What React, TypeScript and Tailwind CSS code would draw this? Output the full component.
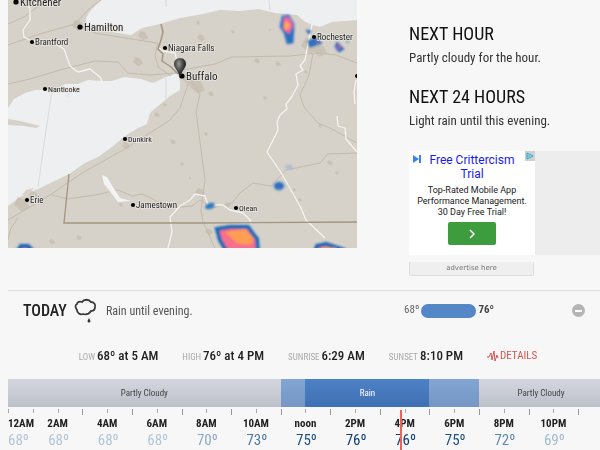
import React from "react";

const roads = [
  "M8 45 L40 34 L75 24 L90 8 L101 0",
  "M8 84 L30 79 L60 70 L95 61 L118 62 L128 73 L150 75 L176 73",
  "M76 24 L95 33 L125 38 L157 43",
  "M8 24 L24 17 L36 8 L50 0",
  "M158 43 L155 55 L158 67 L171 76",
  "M182 70 L215 64 L232 57 L290 56 L318 53 L336 55 L357 63",
  "M192 82 L200 94 L196 112 L205 180 L201 210 L203 222",
  "M188 84 L180 108 L170 120 L150 133 L128 147 L109 158 L82 173 L50 195 L8 220",
  "M52 195 L68 199 L95 195 L118 190 L132 196 L142 194 L155 200 L165 208 L180 207 L192 206 L200 200 L212 208 L232 203 L240 193 L253 183 L271 186 L286 170 L320 163 L328 154 L357 153",
  "M313 54 L309 75 L300 95 L304 107 L318 123 L332 129 L357 143",
  "M18 218 L11 228 L8 240",
  "M203 222 L215 248",
];

const rivers = [
  "M20 0 L30 8 L30 20 L23 30 L24 37 L32 41 L52 42 L64 49 L70 66 L78 72 L90 69 L101 78 L102 83",
  "M159 48 L163 51 L175 53 L178 66",
  "M312 25 L308 44 L305 60 L300 66 L303 70 L296 74 L298 85 L291 98 L286 104 L287 109 L280 115 L277 122 L278 130 L267 152 L280 171 L291 190 L301 208 L306 220 L325 238",
  "M337 116 L338 126 L345 128 L346 139 L351 145 L357 152",
  "M168 248 L172 232 L170 217 L180 206 L190 200 L195 194 L205 196 L208 205 L223 205 L230 210 L243 213 L250 220 L251 224",
  "M356 80 L354 92 L355 104",
];

const towns = [
  [143, 36, 5], [138, 62, 5], [201, 38, 4], [192, 80, 9], [198, 88, 7], [211, 94, 3],
  [233, 32, 2], [257, 61, 3], [278, 64, 3], [265, 98, 2], [198, 23, 2], [306, 72, 2],
  [310, 46, 9], [320, 51, 7], [126, 146, 4], [173, 142, 3], [22, 205, 8], [34, 196, 5],
  [52, 242, 3], [79, 238, 3], [182, 164, 2], [190, 178, 1], [78, 26, 6], [209, 232, 4],
  [330, 163, 3], [337, 173, 2], [320, 126, 2], [157, 115, 3], [165, 105, 2], [200, 193, 5],
  [300, 200, 2], [206, 134, 2], [270, 30, 1], [228, 205, 3], [294, 190, 2], [121, 205, 2],
];

const cities: [string, number, number, number, number][] = [
  ["Kitchener", 16, 2, 11, 6],
  ["Hamilton", 80, 27, 11, 31],
  ["Brantford", 32, 42, 9, 45],
  ["Niagara Falls", 165, 48, 9, 51],
  ["Buffalo", 182, 76, 11, 80],
  ["Nanticoke", 45, 89, 8, 92],
  ["Dunkirk", 125, 139, 8, 142],
  ["Erie", 27, 200, 9, 203],
  ["Jamestown", 133, 205, 9, 208],
  ["Olean", 236, 208, 8, 211],
  ["Rochester", 314, 37, 9, 40],
];

function RadarMap() {
  return (
    <svg
      viewBox="8 0 349 248"
      role="img"
      aria-label="Radar map around Buffalo"
      className="block w-full bg-[#d6d1c9]"
    >
      <defs>
        <filter id="soft" x="-50%" y="-50%" width="200%" height="200%">
          <feGaussianBlur stdDeviation="1.3" />
        </filter>
        <radialGradient id="pin" cx="0.4" cy="0.3" r="0.7">
          <stop offset="0" stopColor="#999" />
          <stop offset="0.5" stopColor="#444" />
          <stop offset="1" stopColor="#111" />
        </radialGradient>
      </defs>
      <g fill="#eeeff1">
        <path d="M101 0 Q97 4 93 8 Q88 13 86 18 Q86 24 88 26 Q94 30 101 30 L118 33 L131 35 L142 28 L160 24 L180 18 L203 14 L220 10 L240 11 L258 9 L275 13 L297 15 L304 21 L312 25 L320 27 L332 22 L357 20 V0 Z" />
        <path d="M8 108 L14 99 L25 93 L35 90 L57 89 L65 84 L78 84 L88 80 L102 81 L112 81 L124 77 L141 79 L153 83 L166 77 L178 73 L180 82 L180 90 L170 96 L158 106 L150 113 L147 124 L138 128 L125 136 L112 147 L98 157 L85 163 L69 174 L40 188 L20 197 L8 206 Z" />
      </g>
      <path d="M8 119 L20 121 L40 126 L36 128 L24 126 L8 125 Z M22 195 L26 190 L34 188 L28 195 Z" fill="#d6d1c9" />
      <g fill="#c7bfb1" opacity="0.8">
        {towns.map(([x, y, r], i) => (
          <path key={i} d={`M${x - r} ${y} l${r / 2} ${-r} l${r} ${r / 3} l${r / 2} ${r} l${-r} ${r / 2} z`} />
        ))}
      </g>
      <path d="M166 0 V7 M166 78 V100 M269 0 L270 10 M52 91 L46 130 L38 187" fill="none" stroke="#d9dadc" />
      <g fill="none" stroke="#c3bbab" strokeWidth="1" strokeLinejoin="round">
        {roads.map((d) => (
          <path key={d} d={d} />
        ))}
      </g>
      <g fill="none" stroke="#f5f4f2" strokeWidth="1.3" strokeLinejoin="round">
        {rivers.map((d) => (
          <path key={d} d={d} />
        ))}
      </g>
      <path d="M102 175 L107 177 L113 187 L120 198 L131 201 L118 202 L112 194 L104 184 Z" fill="#f3f3f3" />
      <path d="M69 174 L64 223 L200 223 L357 222" fill="none" stroke="#a3967f" strokeWidth="1.3" />
      <path d="M161 24 L163 32 L161 40 L158 49 L163 54 L162 61 L171 67 L178 74" fill="none" stroke="#a3967f" strokeWidth="1.5" />
      <g filter="url(#soft)">
        <path d="M282 16 L289 15 L294 24 L294 31 L293 43 L287 44 L284 33 L280 27 Z" fill="#2c6fc0" stroke="#4f86c8" />
        <path d="M284 17 L290 18 L293 26 L289 34 L283 29 Z" fill="#f5659d" />
        <path d="M285 21 L290 24 L288 30 L284 28 Z" fill="#ffae3c" />
        <path d="M308 41 L316 38 L322 43 L316 45 L310 47 Z M306 30 L311 31 L309 34 Z M337 42 L344 49 L339 52 L335 47 Z M347 40 L348 43" fill="#2c6fc0" stroke="#2c6fc0" />
        <circle cx="339" cy="47" r="2" fill="#b55aa5" />
        <circle cx="317" cy="42" r="2" fill="#756db5" />
        <ellipse cx="279" cy="186" rx="5" ry="4" fill="#236dbd" stroke="#5b96cf" />
        <circle cx="279" cy="187" r="1" fill="#8b5bb0" />
        <ellipse cx="210" cy="206" rx="5" ry="3" fill="#3179bf" transform="rotate(-20 210 206)" />
        <ellipse cx="289" cy="167" rx="4" ry="2" fill="#a5bfd4" />
        <ellipse cx="68" cy="95" rx="2" ry="1" fill="#cfe0ef" />
        <path d="M217 229 L230 227 L248 227 L253 234 L257 239 L258 252 H227 L220 240 Z" fill="#f8708c" stroke="#1667b8" strokeWidth="4" />
        <path d="M225 232 L246 229 L254 239 L250 245 L237 243 Z" fill="#ff9d52" />
        <path d="M315 252 L317 246 L326 244 L344 250 V252 Z" fill="#f06698" stroke="#1667b8" strokeWidth="4" />
        <path d="M322 248 L336 249" stroke="#ffac46" strokeWidth="2" />
        <path d="M18 251 L21 246 L28 246 L33 251 Z" fill="#e05aa0" stroke="#1667b8" strokeWidth="4" />
      </g>
      <g fill="#000" stroke="none">
        {cities.map(([name, x, y, size]) => (
          <circle key={name} cx={x} cy={y} r={size > 10 ? 2.6 : 2.1} />
        ))}
        <circle cx="357" cy="76" r="2" />
      </g>
      <path d="M180 58 C176 58 174 61 174 64 C174 68 178 70 180 78 C182 70 186 68 186 64 C186 61 184 58 180 58 Z" fill="url(#pin)" />
      <g fill="#222" stroke="#e9e6e1" strokeWidth="1.5" paintOrder="stroke">
        {cities.map(([name, x, , size, base]) => (
          <text key={name} x={x + (size > 10 ? 4 : 3)} y={base} fontSize={size}>
            {name}
          </text>
        ))}
      </g>
    </svg>
  );
}

function Summary({ title, text }: { title: string; text: string }) {
  return (
    <section className="mb-4">
      <h2 className="text-[18px] leading-6 text-[#111]">{title}</h2>
      <p className="text-[13px] leading-[23px] text-[#333]">{text}</p>
    </section>
  );
}

function Ad() {
  return (
    <>
      <div className="-mr-2 bg-[#ededed]">
        <div className="relative h-[104px] w-[126px] bg-white text-center font-[Roboto,sans-serif]">
          <svg viewBox="0 0 8 8" className="absolute top-1 left-1 size-2" aria-hidden="true">
            <path d="M0 0 L6 4 L0 8 Z M6 0 H8 V8 H6 Z" fill="#3b82f0" />
          </svg>
          <svg viewBox="0 0 10 10" className="absolute top-0 right-0 size-[10px] bg-[#d0d0d0]" aria-hidden="true">
            <path d="M2 2 L8 5 L2 8 Z M2 5 H5" fill="none" stroke="#1fb2cf" />
          </svg>
          <a href="#ad" className="block px-4 pt-0.5 text-[12px] leading-[14px] text-[#1a1aee]">
            Free Crittercism Trial
          </a>
          <p className="pt-1 text-[9px] leading-[11px] whitespace-nowrap text-[#222]">
            Top-Rated Mobile App
            <br />
            Performance Management.
            <br />
            30 Day Free Trial!
          </p>
          <button
            type="button"
            aria-label="Open"
            className="mx-auto mt-1 flex h-[23px] w-12 items-center justify-center rounded-xs bg-[#3d9d3e]"
          >
            <svg viewBox="0 0 6 10" className="h-[10px] w-[6px]" fill="none" stroke="#fff" strokeWidth="1.5">
              <path d="M1 1 L5 5 L1 9" />
            </svg>
          </button>
        </div>
      </div>
      <a
        href="#advertise"
        className="mt-[7px] block h-[14px] w-[125px] rounded-b-xs border border-t-0 border-[#ddd] bg-[#efefef] text-center font-['DejaVu_Sans',sans-serif] text-[7px] leading-3 text-[#777]"
      >
        advertise here
      </a>
    </>
  );
}

const facts = [
  ["LOW", "68º at 5 AM"],
  ["HIGH", "76º at 4 PM"],
  ["SUNRISE", "6:29 AM"],
  ["SUNSET", "8:10 PM"],
];

const hours = [
  ["2AM", "68º", "text-[#b3c6d8]"],
  ["4AM", "68º", "text-[#b3c6d8]"],
  ["6AM", "68º", "text-[#b3c6d8]"],
  ["8AM", "70º", "text-[#8ba9c4]"],
  ["10AM", "73º", "text-[#4c7aa5]"],
  ["noon", "75º", "text-[#1d5084]"],
  ["2PM", "76º", "text-[#0d3f76]"],
  ["4PM", "76º", "text-[#0d3f76]"],
  ["6PM", "75º", "text-[#1d5084]"],
  ["8PM", "72º", "text-[#6089b0]"],
  ["10PM", "69º", "text-[#a4bbd0]"],
];

function Timeline() {
  return (
    <div className="relative mt-[11px] -mr-[11px]">
      <div className="grid h-7 grid-cols-24 text-center text-[9px] leading-7 text-[#444]">
        <div className="col-span-11 bg-linear-to-b from-[#d4d7df] to-[#bcc0c8]">Partly Cloudy</div>
        <div className="bg-linear-to-b from-[#82a5d5] to-[#7596c3]" />
        <div className="col-span-5 bg-linear-to-b from-[#4d81c6] to-[#3f70b2] text-white">Rain</div>
        <div className="col-span-2 bg-linear-to-b from-[#82a5d5] to-[#7596c3]" />
        <div className="col-span-5 bg-linear-to-b from-[#d4d7df] to-[#bcc0c8]">Partly Cloudy</div>
      </div>
      <div className="mt-[2px] grid h-2 grid-cols-24 items-start">
        {Array.from({ length: 24 }, (_, h) => (
          <span
            key={h}
            className={h % 2 && h > 1 ? "h-[6px] border-l border-[#999]" : "h-[4px] border-l border-[#aaa]"}
          />
        ))}
      </div>
      <div className="grid grid-cols-24 text-center whitespace-nowrap">
        <div className="flex flex-col items-start">
          <span className="text-[11px] leading-[13px] font-bold text-[#222]">12AM</span>
          <span className="text-[15px] leading-5 text-[#b3c6d8]">68º</span>
        </div>
        {hours.map(([label, temp, color]) => (
          <div key={label} className="col-span-2 flex flex-col items-center">
            <span className="text-[11px] leading-[13px] font-bold text-[#222]">{label}</span>
            <span className={`pl-0.5 text-[15px] leading-5 ${color}`}>{temp}</span>
          </div>
        ))}
      </div>
      <div className="absolute top-[31px] bottom-0 left-[66%] -ml-px w-0.5 bg-[#f0605f]" />
    </div>
  );
}

export default function App() {
  return (
    <main className="overflow-hidden bg-[#f7f7f7] px-2 font-['Roboto_Condensed','Open_Sans',sans-serif] text-[#222]">
      <div className="flex gap-[52px]">
        <div className="min-w-0 flex-1">
          <RadarMap />
        </div>
        <aside className="w-[183px] pt-[22px]">
          <Summary title="NEXT HOUR" text="Partly cloudy for the hour." />
          <Summary title="NEXT 24 HOURS" text="Light rain until this evening." />
          <div className="pt-[3px]">
            <Ad />
          </div>
        </aside>
      </div>
      <div className="-mr-2 mt-[14px] flex h-10 items-center border-t border-[#ddd] pr-[15px] pl-[15px]">
        <h3 className="w-[51px] text-[16px] font-medium">TODAY</h3>
        <svg viewBox="0 0 24 28" className="h-7 w-6" fill="none" stroke="#3a3a3a" strokeWidth="1.8" aria-hidden="true">
          <path d="M8 5 C10 2 15 2 17 5 C20 5 22 8 21 10 C21 13 19 14 17 14 C15 17 12 18 9 17 C6 18 3 16 3 13 C1 10 1 8 3 7 C3 5 6 4 8 5 Z" />
          <path d="M15 21 L16.500 24 A1.500 1.500 0 1 1 13.500 24 Z" fill="#333" stroke="none" />
        </svg>
        <p className="ml-2 flex-1 text-[12px] text-[#555]">Rain until evening.</p>
        <div className="flex items-center text-[11px] text-[#666]">
          68º
          <span className="mx-0.5 h-[14px] w-[55px] rounded-full bg-[#5487c7]" />
          <b className="text-[#444]">76º</b>
        </div>
        <button
          type="button"
          aria-label="Collapse"
          className="ml-[78px] flex size-[13px] items-center justify-center rounded-full bg-[#b5b5b5]"
        >
          <span className="h-0.5 w-[7px] bg-white" />
        </button>
      </div>
      <div className="-mr-2 mt-[14px] flex h-6 items-center justify-center gap-6 pl-2 whitespace-nowrap">
        {facts.map(([label, value]) => (
          <span key={label} className="flex items-baseline gap-0.5">
            <span className="text-[9px] text-[#aaa]">{label}</span>
            <span className="text-[13px] font-medium">{value}</span>
          </span>
        ))}
        <a href="#details" className="flex items-center gap-px text-[11px] text-[#d9534f]">
          <svg viewBox="0 0 12 12" className="size-3" fill="none" stroke="currentColor" aria-hidden="true">
            <path d="M0 7 H2 L4 3 L5 10 L7 1 L8 11 L10 5 L11 8" />
          </svg>
          DETAILS
        </a>
      </div>
      <Timeline />
    </main>
  );
}
